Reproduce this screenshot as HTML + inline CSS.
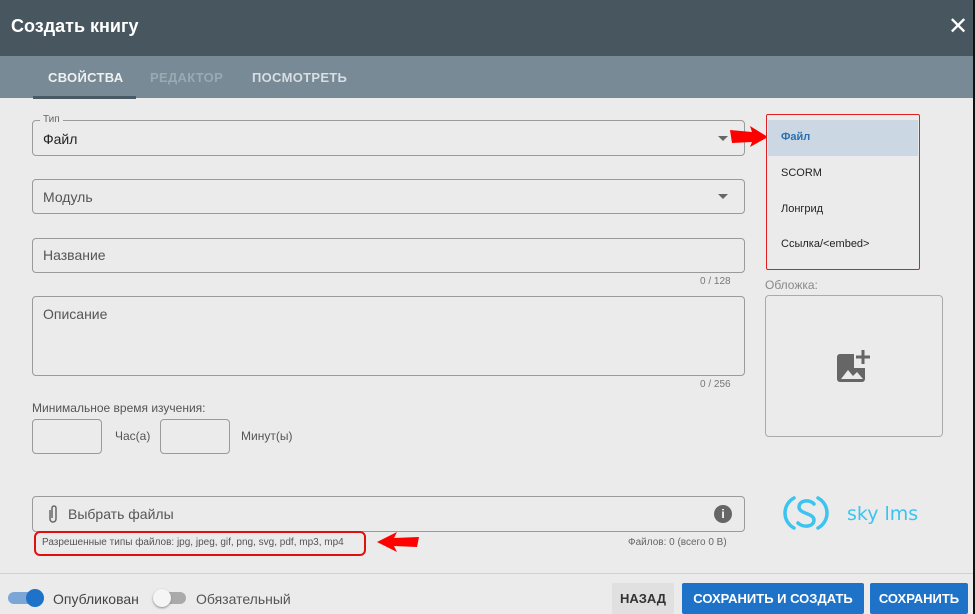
<!DOCTYPE html><html><head><meta charset="utf-8"><style>
*{box-sizing:border-box;margin:0;padding:0}
body{width:975px;height:614px;overflow:hidden;background:#ebebeb;font-family:"Liberation Sans",sans-serif;position:relative;color:#222}
.a{position:absolute}
.hdr{left:0;top:0;width:975px;height:56px;background:#47565f}
.tabs{left:0;top:56px;width:975px;height:42px;background:#778a96}
.tab{top:70px;font-size:13px;font-weight:bold;letter-spacing:.3px}
.fld{border:1px solid #9a9a9a;border-radius:4px;background:#ebebeb}
.ph{font-size:14px;color:#555}
.sm{font-size:10px;color:#777}
.caret{width:0;height:0;border-left:5px solid transparent;border-right:5px solid transparent;border-top:5px solid #666}
.btn{top:583px;height:31px;color:#fff;font-size:13px;font-weight:bold;text-align:center;line-height:31px;background:#1e73c8;border-radius:2px}
</style></head><body>
<div class="a hdr"></div>
<div class="a" style="left:11px;top:16px;color:#fff;font-size:18px;font-weight:bold">Создать книгу</div>
<div class="a" style="left:948px;top:12px;color:#fff;font-size:24px">✕</div>
<div class="a tabs"></div>
<div class="a tab" style="left:48px;color:#f0f0f0">СВОЙСТВА</div>
<div class="a tab" style="left:150px;color:#9aa9b2">РЕДАКТОР</div>
<div class="a tab" style="left:252px;color:#d8dee2">ПОСМОТРЕТЬ</div>
<div class="a" style="left:33px;top:96px;width:103px;height:3px;background:#4a5a64"></div>

<div class="a fld" style="left:32px;top:120px;width:713px;height:36px"></div>
<div class="a" style="left:40px;top:114px;font-size:10px;color:#666;background:#ebebeb;padding:0 3px">Тип</div>
<div class="a" style="left:43px;top:131px;font-size:14px">Файл</div>
<div class="a caret" style="left:718px;top:136px"></div>

<div class="a fld" style="left:32px;top:179px;width:713px;height:35px"></div>
<div class="a ph" style="left:43px;top:189px">Модуль</div>
<div class="a caret" style="left:718px;top:194px"></div>

<div class="a fld" style="left:32px;top:238px;width:713px;height:35px"></div>
<div class="a ph" style="left:43px;top:247px">Название</div>
<div class="a sm" style="left:700px;top:276px">0 / 128</div>

<div class="a fld" style="left:32px;top:296px;width:713px;height:80px"></div>
<div class="a ph" style="left:43px;top:306px">Описание</div>
<div class="a sm" style="left:700px;top:379px">0 / 256</div>

<div class="a" style="left:32px;top:401px;font-size:12px;color:#555">Минимальное время изучения:</div>
<div class="a fld" style="left:32px;top:419px;width:70px;height:35px"></div>
<div class="a" style="left:115px;top:429px;font-size:12px;color:#555">Час(а)</div>
<div class="a fld" style="left:160px;top:419px;width:70px;height:35px"></div>
<div class="a" style="left:241px;top:429px;font-size:12px;color:#555">Минут(ы)</div>

<div class="a fld" style="left:32px;top:496px;width:713px;height:36px"></div>
<svg class="a" style="left:47px;top:503px" width="12" height="22"><path d="M3 7v9a3 3 0 0 0 6 0V5a2 2 0 0 0-4 0v10" fill="none" stroke="#666" stroke-width="1.5"/></svg>
<div class="a ph" style="left:68px;top:506px">Выбрать файлы</div>
<div class="a" style="left:714px;top:505px;width:18px;height:18px;border-radius:50%;background:#666;color:#fff;font-size:12px;font-weight:bold;text-align:center;line-height:18px">i</div>
<div class="a" style="left:34px;top:531px;width:332px;height:25px;border:2px solid #e01010;border-radius:6px"></div>
<div class="a sm" style="left:42px;top:537px;color:#555">Разрешенные типы файлов: jpg, jpeg, gif, png, svg, pdf, mp3, mp4</div>
<div class="a sm" style="left:628px;top:537px;color:#666">Файлов: 0 (всего 0 B)</div>
<svg class="a" style="left:375px;top:530px" width="45" height="24"><polygon points="2,12 22,2 19,8 44,7 42,17 19,16 22,22" fill="#f00"/></svg>

<svg class="a" style="left:728px;top:125px" width="42" height="24"><polygon points="2,5 24,7 22,1 40,12 22,22 24,17 4,18" fill="#f00"/></svg>
<div class="a" style="left:766px;top:114px;width:154px;height:156px;border:1.5px solid #e02020;border-radius:2px;background:#ebebeb"></div>
<div class="a" style="left:768px;top:120px;width:150px;height:36px;background:#cbd8e3"></div>
<div class="a" style="left:781px;top:131px;font-size:11px;color:#2b6fb0;font-weight:bold">Файл</div>
<div class="a" style="left:781px;top:167px;font-size:11px">SCORM</div>
<div class="a" style="left:781px;top:203px;font-size:11px">Лонгрид</div>
<div class="a" style="left:781px;top:238px;font-size:11px">Ссылка/&lt;embed&gt;</div>

<div class="a" style="left:765px;top:278px;font-size:12px;color:#888">Обложка:</div>
<div class="a fld" style="left:765px;top:295px;width:178px;height:142px;border-color:#aaa"></div>
<svg class="a" style="left:836px;top:348px" width="38" height="36"><rect x="1" y="6" width="28" height="28" rx="3" fill="#666"/><rect x="18" y="0" width="20" height="20" fill="#ebebeb"/><path d="M27 2v14M20 9h14" stroke="#666" stroke-width="3"/><path d="M5 31l7-9 5 6 4-4 6 7z" fill="#ebebeb"/></svg>

<svg class="a" style="left:780px;top:490px" width="160" height="46"><g fill="none" stroke="#3cc3f0" stroke-width="3.5" stroke-linecap="round"><path d="M14 8a17 17 0 0 0 0 30"/><path d="M38 8a17 17 0 0 1 0 30"/><path d="M34 14c-4-5-15-4-15 3s15 6 15 13-11 8-16 3"/></g><text x="67" y="30" font-family="DejaVu Sans" font-size="19" fill="#3cc3f0">sky lms</text></svg>

<div class="a" style="left:0;top:573px;width:975px;height:1px;background:#d0d0d0"></div>
<div class="a" style="left:8px;top:592px;width:36px;height:12px;border-radius:6px;background:#7ba6d6"></div>
<div class="a" style="left:26px;top:589px;width:18px;height:18px;border-radius:50%;background:#1e73c8"></div>
<div class="a" style="left:53px;top:591px;font-size:14px;color:#444">Опубликован</div>
<div class="a" style="left:156px;top:592px;width:30px;height:12px;border-radius:6px;background:#aaa"></div>
<div class="a" style="left:153px;top:589px;width:18px;height:18px;border-radius:50%;background:#f5f5f5;box-shadow:0 1px 2px #888"></div>
<div class="a" style="left:196px;top:591px;font-size:14px;color:#555">Обязательный</div>
<div class="a btn" style="left:612px;width:62px;background:#e0e0e0;color:#333">НАЗАД</div>
<div class="a btn" style="left:682px;width:182px">СОХРАНИТЬ И СОЗДАТЬ</div>
<div class="a btn" style="left:870px;width:98px">СОХРАНИТЬ</div>
<div class="a" style="left:973px;top:0;width:2px;height:614px;background:#111"></div>
</body></html>
